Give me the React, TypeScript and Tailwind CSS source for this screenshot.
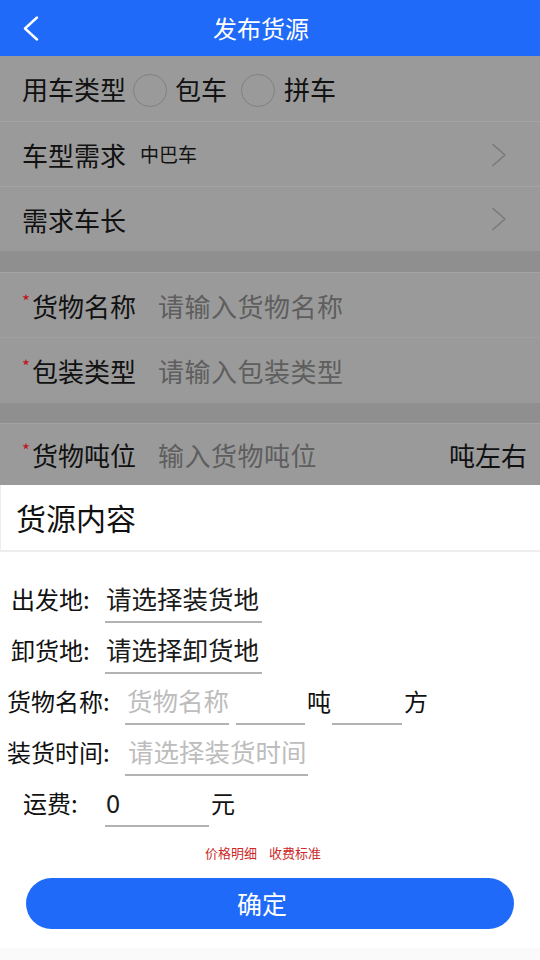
import React from 'react'

const ChevronRight = () => (
    <svg width="16" height="24" viewBox="0 0 16 24" fill="none">
        <polyline points="2,1.5 14,12 2,22.5" stroke="#7a7a7a" strokeWidth="1.6" strokeLinecap="round" strokeLinejoin="round" />
    </svg>
)

const Radio = () => (
    <span className="block w-[34px] h-[33px] rounded-full border-[1.5px] border-[#808080]" />
)

const DimRow = ({ children, className = "" }: { children: React.ReactNode; className?: string }) => (
    <div className={`flex items-center pl-[22px] pr-[13px] text-[26px] text-[#111] ${className}`}>
        {children}
    </div>
)

const Required = ({ label }: { label: string }) => (
    <span className="flex items-center">
        <span className="text-[#c0151b] text-[17px] self-start mt-[2px] mr-[2px]">*</span>
        {label}
    </span>
)

const Line = ({ w, children, muted = false }: { w: string; children?: React.ReactNode; muted?: boolean }) => (
    <div className={`${w} h-[48px] border-b-2 border-[#b3b3b3] flex items-center text-[25.5px] ${muted ? "text-[#bdbdbd]" : "text-[#1a1a1a]"}`}>
        {children}
    </div>
)

export default function App() {
    return (
        <div className="w-[540px] h-[960px] flex flex-col bg-white font-['Noto_Sans_CJK_SC','Noto_Sans',sans-serif] overflow-hidden">
            {/* Header */}
            <div className="h-[56px] shrink-0 bg-[#1f6af8] grid grid-cols-[60px_1fr_60px] items-center">
                <button className="pl-[23px] flex items-center">
                    <svg width="16" height="25" viewBox="0 0 16 25" fill="none">
                        <polyline points="14,1.5 2,12.5 14,23.5" stroke="white" strokeWidth="2.4" strokeLinecap="round" strokeLinejoin="round" />
                    </svg>
                </button>
                <h1 className="text-center text-white text-[24px] pr-[18px]">发布货源</h1>
                <span />
            </div>

            {/* Dimmed form behind the sheet */}
            <div className="shrink-0 bg-[#9a9a9a]">
                <DimRow className="h-[66px] border-b border-[#a4a4a4]">
                    <span>用车类型</span>
                    <span className="ml-[7px] flex mt-[4px]"><Radio /></span>
                    <span className="ml-[8px]">包车</span>
                    <span className="ml-[14px] flex mt-[4px]"><Radio /></span>
                    <span className="ml-[9px]">拼车</span>
                </DimRow>
                <DimRow className="h-[65px] border-b border-[#a4a4a4]">
                    <span>车型需求</span>
                    <span className="ml-[14px] text-[19px]">中巴车</span>
                    <span className="ml-auto mr-[20px] mt-[2px] flex"><ChevronRight /></span>
                </DimRow>
                <DimRow className="h-[64px]">
                    <span>需求车长</span>
                    <span className="ml-auto mr-[20px] flex"><ChevronRight /></span>
                </DimRow>
                <div className="h-[21px] bg-[#8f8f8f]" />
                <DimRow className="h-[66px] border-t border-[#a3a3a3] border-b border-b-[#a0a0a0] text-[26.5px]">
                    <Required label="货物名称" />
                    <span className="ml-[22px] text-[#5e5e5e] tracking-[0.5px]">请输入货物名称</span>
                </DimRow>
                <DimRow className="h-[65px] text-[26.5px]">
                    <Required label="包装类型" />
                    <span className="ml-[22px] text-[#5e5e5e] tracking-[0.5px]">请输入包装类型</span>
                </DimRow>
                <div className="h-[20px] bg-[#8f8f8f]" />
                <DimRow className="h-[62px] border-t border-[#a3a3a3] text-[26.5px]">
                    <Required label="货物吨位" />
                    <span className="ml-[22px] text-[#5e5e5e] tracking-[0.5px]">输入货物吨位</span>
                    <span className="ml-auto">吨左右</span>
                </DimRow>
            </div>

            {/* Bottom sheet */}
            <div className="flex-1 flex flex-col bg-white">
                <div className="h-[67px] shrink-0 flex items-center pl-[15px] border-l border-b-2 border-[#eeeeee] text-[30px] text-[#111]">
                    货源内容
                </div>

                <div className="flex flex-col gap-[3px] mt-[23px] text-[24px] text-[#111]">
                    <div className="flex items-center pl-[11px]">
                        <span className="w-[86px]">出发地:</span>
                        <span className="ml-[8px]"><Line w="w-[157px]"><span className="pl-[1px]">请选择装货地</span></Line></span>
                    </div>
                    <div className="flex items-center pl-[11px]">
                        <span className="w-[86px]">卸货地:</span>
                        <span className="ml-[8px]"><Line w="w-[157px]"><span className="pl-[1px]">请选择卸货地</span></Line></span>
                    </div>
                    <div className="flex items-center pl-[7px]">
                        <span className="w-[106px]">货物名称:</span>
                        <span className="ml-[12px]"><Line w="w-[104px]" muted><span className="pl-[2px]">货物名称</span></Line></span>
                        <span className="ml-[7px]"><Line w="w-[69px]" /></span>
                        <span className="ml-[2px] w-[24px]">吨</span>
                        <span className="ml-[1px]"><Line w="w-[70px]" /></span>
                        <span className="ml-[2px]">方</span>
                    </div>
                    <div className="flex items-center pl-[7px]">
                        <span className="w-[112px]">装货时间:</span>
                        <span className="ml-[6px]"><Line w="w-[183px]" muted><span className="pl-[3px]">请选择装货时间</span></Line></span>
                    </div>
                    <div className="flex items-center pl-[23px]">
                        <span className="w-[60px]">运费:</span>
                        <span className="ml-[22px]"><Line w="w-[104px]"><span className="pl-[1px]">0</span></Line></span>
                        <span className="ml-[2px]">元</span>
                    </div>
                </div>

                <div className="mt-[17px] pl-[205px] flex gap-[12px] text-[13px] leading-[18px] text-[#cc2a2a]">
                    <span>价格明细</span>
                    <span>收费标准</span>
                </div>

                <button className="mt-[16px] mx-[26px] h-[51px] rounded-full bg-[#1f6af8] text-white text-[25px] flex items-center justify-center pr-[16px]">
                    确定
                </button>

                <div className="mt-auto h-[12px] bg-[#fafafa]" />
            </div>
        </div>
    )
}
